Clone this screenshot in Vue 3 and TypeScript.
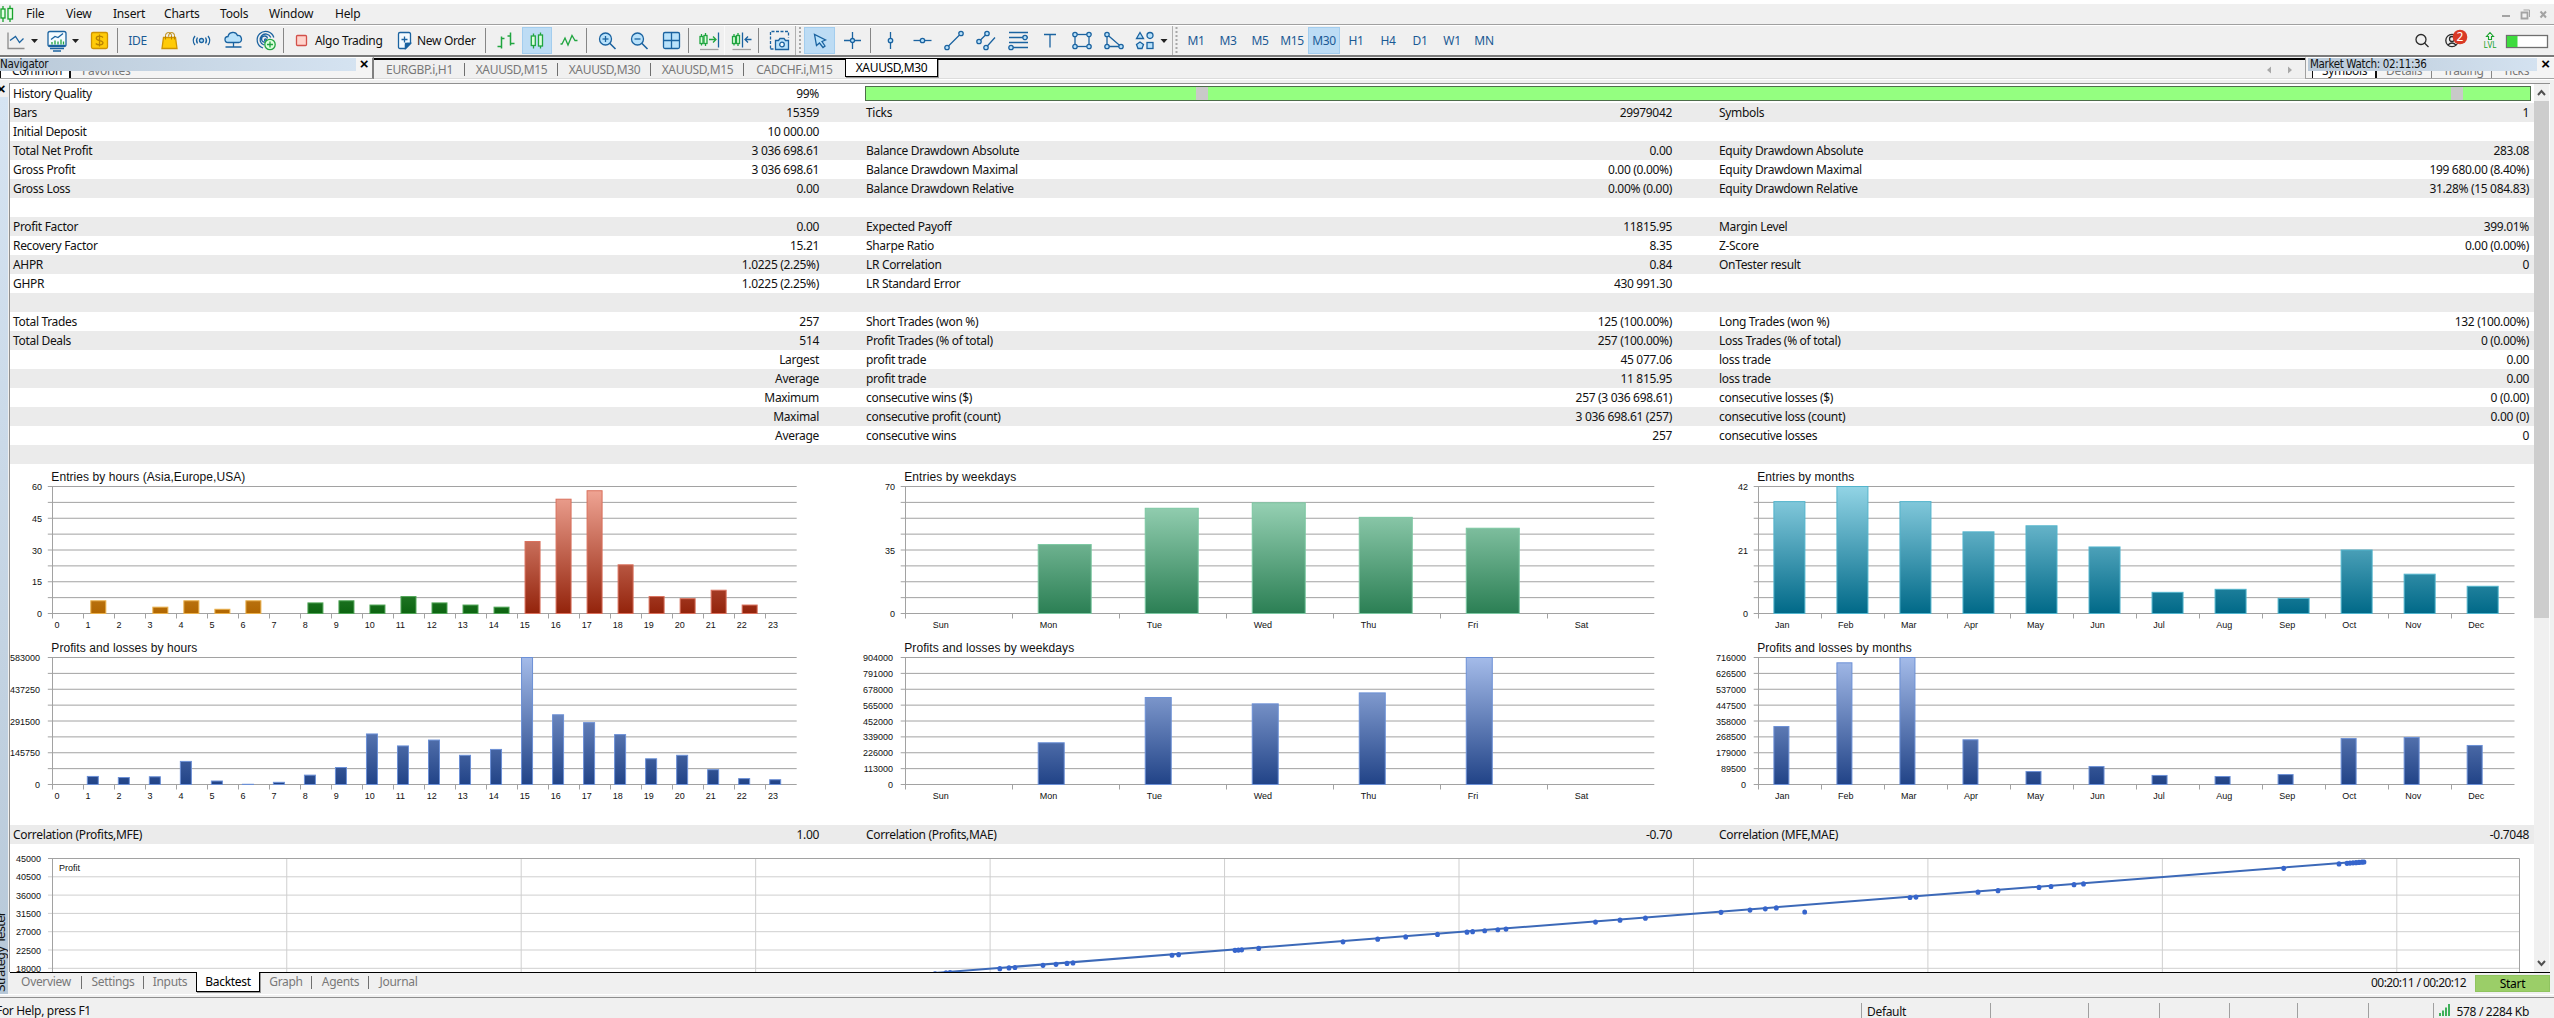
<script setup lang="ts">
interface Tool { k: string; w: number; dx?: number; on?: boolean; t?: string }
interface Chart {
  title: string; tw: number; box: number[]; left: number; right: number; top: number
  labels: string[]; lx: number; max: number; ticks: string[]; every: number; tx: number
  values: number[]; bx: number; bw: number; color: (i: number) => string
}

const menu = [
  { t: 'File', w: 40 }, { t: 'View', w: 47 }, { t: 'Insert', w: 51 }, { t: 'Charts', w: 56 },
  { t: 'Tools', w: 49 }, { t: 'Window', w: 66 }, { t: 'Help', w: 40 },
]

const tools: Tool[] = [
  { k: 'line', w: 31 }, { k: 'arrow', w: 7 }, { k: 'monitor', w: 34, dx: 2 }, { k: 'arrow', w: 7 },
  { k: 'dollar', w: 38, dx: 1.5 }, { k: 'sep', w: 1 }, { k: 'text', t: 'IDE', w: 39 }, { k: 'bag', w: 27, dx: -1 },
  { k: 'signal', w: 34, dx: .5 }, { k: 'cloud', w: 31 }, { k: 'vps', w: 34 }, { k: 'sep', w: 1 },
  { k: 'stop', w: 28, dx: 3.5 }, { k: 'label', t: 'Algo Trading', w: 83 }, { k: 'order', w: 19 },
  { k: 'label', t: 'New Order', w: 71 }, { k: 'sep', w: 1 }, { k: 'bars', w: 36, dx: 1.5 },
  { k: 'candles', w: 30, on: true }, { k: 'zigzag', w: 34 }, { k: 'sep', w: 1 }, { k: 'zoomin', w: 36, dx: 2 },
  { k: 'zoomout', w: 32 }, { k: 'grid', w: 33 }, { k: 'sep', w: 1 }, { k: 'scroll', w: 36, dx: 2 },
  { k: 'shift', w: 33 }, { k: 'sep', w: 1 }, { k: 'camera', w: 36, dx: 2.5 }, { k: 'end', w: 1 },
  { k: 'grip', w: 8 }, { k: 'cursor', w: 31, on: true }, { k: 'cross', w: 35 }, { k: 'sep', w: 1 },
  { k: 'vline', w: 36, dx: 1.5 }, { k: 'hline', w: 31 }, { k: 'trend', w: 32 }, { k: 'channel', w: 32 },
  { k: 'fibo', w: 32 }, { k: 'letter', w: 32 }, { k: 'rect', w: 32 }, { k: 'tri', w: 32 }, { k: 'shapes', w: 30 },
  { k: 'arrow', w: 8 }, { k: 'gap', w: 4 }, { k: 'end', w: 1 }, { k: 'grip', w: 7 },
  ...['M1', 'M3', 'M5', 'M15', 'M30', 'H1', 'H4', 'D1', 'W1', 'MN'].map(t => ({ k: 'text', t, w: 32, on: t === 'M30' })),
  { k: 'space', w: 0 }, { k: 'search', w: 36 }, { k: 'user', w: 36 }, { k: 'lvl', w: 28 }, { k: 'meter', w: 50 },
]

const chartTabs = [
  { t: 'EURGBP.i,H1', w: 91 }, { t: 'XAUUSD,M15', w: 93 }, { t: 'XAUUSD,M30', w: 93 },
  { t: 'XAUUSD,M15', w: 93 }, { t: 'CADCHF.i,M15', w: 101 }, { t: 'XAUUSD,M30', w: 93 },
]
const testerTabs = [
  { t: 'Overview', w: 72 }, { t: 'Settings', w: 62 }, { t: 'Inputs', w: 52 }, { t: 'Backtest', w: 64 },
  { t: 'Graph', w: 52 }, { t: 'Agents', w: 57 }, { t: 'Journal', w: 59 },
]

const rows: string[][] = [
  ['History Quality', '99%', '', '', '', ''],
  ['Bars', '15359', 'Ticks', '29979042', 'Symbols', '1'],
  ['Initial Deposit', '10 000.00', '', '', '', ''],
  ['Total Net Profit', '3 036 698.61', 'Balance Drawdown Absolute', '0.00', 'Equity Drawdown Absolute', '283.08'],
  ['Gross Profit', '3 036 698.61', 'Balance Drawdown Maximal', '0.00 (0.00%)', 'Equity Drawdown Maximal', '199 680.00 (8.40%)'],
  ['Gross Loss', '0.00', 'Balance Drawdown Relative', '0.00% (0.00)', 'Equity Drawdown Relative', '31.28% (15 084.83)'],
  ['', '', '', '', '', ''],
  ['Profit Factor', '0.00', 'Expected Payoff', '11815.95', 'Margin Level', '399.01%'],
  ['Recovery Factor', '15.21', 'Sharpe Ratio', '8.35', 'Z-Score', '0.00 (0.00%)'],
  ['AHPR', '1.0225 (2.25%)', 'LR Correlation', '0.84', 'OnTester result', '0'],
  ['GHPR', '1.0225 (2.25%)', 'LR Standard Error', '430 991.30', '', ''],
  ['', '', '', '', '', ''],
  ['Total Trades', '257', 'Short Trades (won %)', '125 (100.00%)', 'Long Trades (won %)', '132 (100.00%)'],
  ['Total Deals', '514', 'Profit Trades (% of total)', '257 (100.00%)', 'Loss Trades (% of total)', '0 (0.00%)'],
  ['', 'Largest', 'profit trade', '45 077.06', 'loss trade', '0.00'],
  ['', 'Average', 'profit trade', '11 815.95', 'loss trade', '0.00'],
  ['', 'Maximum', 'consecutive wins ($)', '257 (3 036 698.61)', 'consecutive losses ($)', '0 (0.00)'],
  ['', 'Maximal', 'consecutive profit (count)', '3 036 698.61 (257)', 'consecutive loss (count)', '0.00 (0)'],
  ['', 'Average', 'consecutive wins', '257', 'consecutive losses', '0'],
  ['', '', '', '', '', ''],
]
const correlation = ['Correlation (Profits,MFE)', '1.00', 'Correlation (Profits,MAE)', '-0.70', 'Correlation (MFE,MAE)', '-0.7048']

const hours = Array.from({ length: 24 }, (_, i) => String(i))
const days = ['Sun', 'Mon', 'Tue', 'Wed', 'Thu', 'Fri', 'Sat']
const months = ['Jan', 'Feb', 'Mar', 'Apr', 'May', 'Jun', 'Jul', 'Aug', 'Sep', 'Oct', 'Nov', 'Dec']
const H = { left: 52.3, right: 796.7, labels: hours, lx: 2.2 }
const W = { left: 905.2, right: 1654.3, labels: days, lx: 27.5 }
const M = { left: 1758.2, right: 2514.5, labels: months, lx: 16.8 }

const charts: Chart[] = [
  { ...H, title: 'Entries by hours (Asia,Europe,USA)', tw: 194, box: [10, 464, 846, 176], top: 486.5, max: 60, every: 2,
    ticks: ['60', '45', '30', '15', '0'], tx: 42, bx: 7, bw: 15.5, color: i => (i < 8 ? 'orange' : i < 15 ? 'green' : 'red'),
    values: [0, 6, 0, 3, 6, 2, 6, 0, 5, 6, 4, 8, 5, 4, 3, 34, 54, 58, 23, 8, 7, 11, 4, 0] },
  { ...W, title: 'Entries by weekdays', tw: 112, box: [856, 464, 853, 176], top: 486.5, max: 70, every: 4,
    ticks: ['70', '35', '0'], tx: 895, bx: 25.5, bw: 53.5, color: () => 'mint', values: [0, 38, 58, 61, 53, 47, 0] },
  { ...M, title: 'Entries by months', tw: 97, box: [1709, 464, 825, 176], top: 486.5, max: 42, every: 4,
    ticks: ['42', '21', '0'], tx: 1748, bx: 15.2, bw: 31.5, color: () => 'teal', values: [37, 42, 37, 27, 29, 22, 7, 8, 5, 21, 13, 9] },
  { ...H, title: 'Profits and losses by hours', tw: 146, box: [10, 640, 846, 185], top: 657.5, max: 583, every: 2,
    ticks: ['583000', '437250', '291500', '145750', '0'], tx: 40, bx: 3.5, bw: 11.5, color: () => 'blue',
    values: [0, 37, 32, 35.5, 106, 16, 1, 10, 43, 78, 232, 177, 204, 134, 161, 583, 320, 284, 229, 118, 134, 68, 27, 22] },
  { ...W, title: 'Profits and losses by weekdays', tw: 170, box: [856, 640, 853, 185], top: 657.5, max: 904, every: 1,
    ticks: ['904000', '791000', '678000', '565000', '452000', '339000', '226000', '113000', '0'], tx: 893, bx: 25.5, bw: 26.5,
    color: () => 'blue', values: [0, 297, 619, 574, 652, 904, 0] },
  { ...M, title: 'Profits and losses by months', tw: 154.5, box: [1709, 640, 825, 185], top: 657.5, max: 716, every: 1,
    ticks: ['716000', '626500', '537000', '447500', '358000', '268500', '179000', '89500', '0'], tx: 1746, bx: 15.2, bw: 15.5,
    color: () => 'blue', values: [327, 686, 716, 252, 73, 101, 51, 45, 56, 259, 265, 220] },
]
const PLOT = 127
const strokes: Record<string, string> = { orange: '#e9b04c', green: '#4fa556', red: '#d9705c', mint: '#7cc7a2', teal: '#52b4cc', blue: '#6c90d6' }
const stops: [string, string, string][] = [
  ['orange', '#f6d08c', '#b16600'], ['green', '#90d898', '#0c6410'], ['red', '#f2a898', '#93230b'],
  ['mint', '#a5dcc1', '#2b7f54'], ['teal', '#92d4e5', '#006988'], ['blue', '#a4bbe9', '#214387'],
]
const step = (c: Chart) => (c.right - c.left) / c.labels.length
const barH = (c: Chart, v: number) => (v / c.max) * PLOT
const bars = (c: Chart) => c.values
  .map((v, i) => ({ x: c.left + i * step(c) + c.bx, h: barH(c, v), col: c.color(i) }))
  .filter(b => b.h > 0)
  .map(b => ({ ...b, y: c.top + PLOT - b.h }))

const profitScale = ['45000', '40500', '36000', '31500', '27000', '22500', '18000']
const lineY = (x: number) => 972.1 - (x - 946) * 0.0782
const dots = [
  935, 946, 950, 999.8, 1009, 1015, 1043, 1056, 1067, 1073, 1172, 1178.6, 1235, 1238.4, 1241.7, 1258.7, 1343, 1377.7,
  1405.7, 1437.5, 1467, 1472.6, 1484.7, 1497.8, 1506, 1595.5, 1620, 1645.4, 1721, 1750, 1765.3, 1776.3, 1910, 1916,
  1978, 1998, 2039, 2051, 2074, 2083.5, 2283.7, 2339, 2347, 2350, 2353, 2356, 2359, 2362, 2364,
]
const statusCells = [129, 98, 70.5, 70.5, 68, 71, 65]
</script>

<template>
  <div class="app">
    <div class="cap"></div>
    <nav class="menubar">
      <svg class="logo" width="26" height="20" viewBox="0 0 26 20">
        <g fill="#e4ffe4" stroke="#18a32c" stroke-width="1.3"><path d="M3 2v3M3 14v4M10 1.5v3M10 15v3" /><rect x="1" y="5" width="4" height="9" /><rect x="8" y="4.500" width="4.500" height="10.500" /></g>
      </svg>
      <span v-for="m in menu" :key="m.t" :style="{ width: m.w + 'px' }">{{ m.t }}</span>
      <svg class="win" width="54" height="20" viewBox="2500 4 54 20">
        <g stroke="#a3a3a3" fill="none"><path d="M2502 16h8" stroke-width="2" /><path d="M2521.500 12.500h6v6h-6z" stroke-width="1.800" /><path d="M2523.500 10h6v7" /><path d="M2540.500 11.500l5.500 6m0-6l-5.500 6" stroke-width="2" /></g>
      </svg>
    </nav>

    <div class="toolbar">
      <div v-for="(t, i) in tools" :key="i" class="tool" :class="[t.k, { on: t.on }]" :style="t.k === 'space' ? {} : { width: t.w + 'px' }">
        <template v-if="t.t">{{ t.t }}</template>
        <svg v-else-if="!['sep', 'end', 'gap', 'space'].includes(t.k)" :width="t.w" height="29" :viewBox="`${-t.w / 2 - (t.dx || 0)} -14.5 ${t.w} 29`">
          <g fill="none" stroke="#1b63a0" stroke-width="1.3">
            <template v-if="t.k === 'line'"><path d="M-7.500-8V8H9" stroke="#8c8c8c" /><path d="M-5.500 0L0-4 4 2 8-2" /></template>
            <path v-else-if="t.k === 'arrow'" d="M-3.500-1.500h7L0 2.500z" fill="#222" stroke="none" />
            <template v-else-if="t.k === 'monitor'"><rect x="-9" y="-9" width="18" height="15" rx="2" fill="#f4fbff" /><path d="M-8 5h16M-7 8H7M-4 10.500H4" stroke-width="1.700" /><path d="M-6-1l4-3 3 1 5-4" /><path d="M-5 4V1.500M-2 4V0M1 4V1M4 4v-5M6.500 4v-3" stroke="#20a540" /></template>
            <template v-else-if="t.k === 'dollar'"><rect x="-8" y="-8" width="16" height="16" rx="1.500" fill="#ffcb08" stroke="#cf9400" /><path d="M3.500-3C2-5-3.200-5-3.200-2.200S3.500-.300 3.500 2.300-2 5-3.700 3M0-6V6" stroke="#b98300" /></template>
            <template v-else-if="t.k === 'bag'"><path d="M-6-3H6L7.500 8h-15z" fill="#ffcb08" stroke="#cf9400" /><path d="M-4-1v-4q0-3 3-3t3 3v4M-1-4q0-4 3-4t3 3v4" stroke="#b98300" stroke-width="1" /></template>
            <template v-else-if="t.k === 'signal'"><circle r="2" fill="#b9e2fb" /><path d="M-4-3Q-6 0-4 3M-6.500-4.500Q-10 0-6.500 4.500M4-3Q6 0 4 3M6.500-4.500Q10 0 6.500 4.500" /></template>
            <template v-else-if="t.k === 'cloud'"><path d="M-5.500 2a3 3 0 0 1 0-6 5 5 0 0 1 9.500-1A3.600 3.600 0 0 1 5.500 2z" fill="#b9e2fb" /><path d="M0 2v4M-8 6.500h16M-1.500 6.500h3" /></template>
            <template v-else-if="t.k === 'vps'"><path d="M-3 7.500A8.500 8.500 0 1 1 7.800-3M-2 4.500A5.600 5.600 0 1 1 4.800-3M-1 1.500A3 3 0 1 1 1.500-2" /><circle cx="-.500" cy="-.500" r="1" /><circle cx="4" cy="4" r="5.200" fill="#dcffdc" stroke="#20a540" /><path d="M1 4h6M4 1v6" stroke="#20a540" /></template>
            <rect v-else-if="t.k === 'stop'" x="-5" y="-5" width="10" height="10" rx="1" fill="#ffd3cc" stroke="#d2504a" />
            <template v-else-if="t.k === 'order'"><path d="M-6-6.500q0-1.500 1.500-1.500h9Q6-8 6-6.500V3L1 8h-5.500Q-6 8-6 6.500zM6 3H2.500Q1 3 1 4.500V8" fill="#f4fbff" /><path d="M1 8V3h5z" fill="#1b63a0" /><path d="M-3-1h6M0-4v6" /></template>
            <g v-else-if="t.k === 'bars'" stroke="#20a540" stroke-width="1.500"><path d="M-4-4V8M-8 6h4M-4-2h3M5-8V5M2-4.500h3M5 3h4" /></g>
            <g v-else-if="t.k === 'candles'" stroke="#20a540" fill="#dcffdc"><path d="M-3.500-7v3M-3.500 5v3M3.500-8v3M3.500 5v3" /><rect x="-5.700" y="-4.500" width="4" height="9.500" /><rect x="1.500" y="-5.500" width="4" height="11" /></g>
            <path v-else-if="t.k === 'zigzag'" d="M-8.500 3.500h1.500l3-6 3 7L3-5l3 5h2.500" stroke="#20a540" />
            <template v-else-if="t.k === 'zoomin' || t.k === 'zoomout'"><path d="M2.500 2.500L8.500 8.500" stroke-width="1.600" /><circle cx="-1.500" cy="-1.500" r="6" fill="#b9e2fb" /><path d="M-4.500-1.500h6" /><path v-if="t.k === 'zoomin'" d="M-1.500-4.500v6" /></template>
            <template v-else-if="t.k === 'grid'"><rect x="-8" y="-8" width="16" height="16" rx="1.500" fill="#b9e2fb" /><path d="M-8 0H8M0-8V8" /></template>
            <template v-else-if="t.k === 'scroll'"><g stroke="#20a540" fill="#dcffdc"><path d="M-7.500-6.500V5M-3.500-7.500V5.500" /><rect x="-9" y="-4" width="3" height="7" /><rect x="-5" y="-5" width="3" height="8" /><path d="M0-1h7M4-4l3 3-3 3" fill="none" /></g><path d="M9.500-8V7" /><path d="M-9 9H9.500" stroke="#a0a0a0" /></template>
            <template v-else-if="t.k === 'shift'"><g stroke="#20a540" fill="#dcffdc"><path d="M-7.500-6.500V5M-3.500-7.500V5.500" /><rect x="-9" y="-4" width="3" height="7" /><rect x="-5" y="-5" width="3" height="8" /></g><path d="M1-8V7M3.500-1H10M6.500-4l-3 3 3 3" /><path d="M-9 9H9.500" stroke="#a0a0a0" /></template>
            <template v-else-if="t.k === 'camera'"><path d="M-9 8V-9H9V-3M-9 8.500h4" stroke-dasharray="3 1.500" /><path d="M-4 0h3l1.500-2h4L6 0h3v9H-4z" fill="#b9e2fb" /><circle cx="2.500" cy="4" r="2.300" fill="#f4fbff" /></template>
            <path v-else-if="t.k === 'grip'" d="M0-13.500V14" stroke="#a8a8a8" stroke-width="2" stroke-dasharray="2 2" />
            <path v-else-if="t.k === 'cursor'" d="M-5-6L-3 5 0 2.500 3.500 7 5.500 5.500 2.500 1 6-.500z" fill="#b9e2fb" />
            <template v-else-if="t.k === 'cross'"><path d="M-8.500 0h17M0-8.500v17" /><circle r="2" fill="#b9e2fb" /></template>
            <template v-else-if="t.k === 'vline'"><path d="M0-8.500v17" /><circle r="2.200" fill="#b9e2fb" /></template>
            <template v-else-if="t.k === 'hline'"><path d="M-9 0H9" /><circle r="2.200" fill="#b9e2fb" /></template>
            <g v-else-if="t.k === 'trend'" fill="#b9e2fb"><path d="M-7 7L7-7" /><circle cx="-7" cy="7" r="2.200" /><circle cx="7" cy="-7" r="2.200" /></g>
            <g v-else-if="t.k === 'channel'" fill="#b9e2fb"><path d="M-7 1L1-7M0 7L9-3" /><circle cx="-7" cy="1" r="2.200" /><circle cx="1" cy="-7" r="2.200" /><circle cx="0" cy="7" r="2.200" /></g>
            <g v-else-if="t.k === 'fibo'" fill="#b9e2fb"><path d="M-9-8H10M-9-3H10M-9 2H10M-7 7H10" /><circle cx="7" cy="-3" r="2.200" /><circle cx="-7" cy="7" r="2.200" /></g>
            <path v-else-if="t.k === 'letter'" d="M-6-6H6M0-6V7" />
            <g v-else-if="t.k === 'rect'" fill="#b9e2fb"><rect x="-7" y="-6" width="14" height="12" fill="none" /><circle cx="-7" cy="-6" r="2.200" /><circle cx="7" cy="-6" r="2.200" /><circle cx="-7" cy="6" r="2.200" /><circle cx="7" cy="6" r="2.200" /></g>
            <g v-else-if="t.k === 'tri'" fill="#b9e2fb"><path d="M-7-6V6H7z" fill="none" /><circle cx="-7" cy="-6" r="2.200" /><circle cx="-7" cy="6" r="2.200" /><circle cx="7" cy="6" r="2.200" /></g>
            <g v-else-if="t.k === 'shapes'" fill="#b9e2fb"><path d="M-5-8l3.500 6h-7zM-5 1.500L-1.500 4-3 8h-4l-1.500-4z" /><circle cx="5" cy="-5" r="3" /><rect x="2" y="2" width="6" height="6" /></g>
            <g v-else-if="t.k === 'search'" stroke="#2a2a2a"><circle cx="-1" cy="-1" r="5" /><path d="M2.500 2.500L6.500 6.500" /></g>
            <g v-else-if="t.k === 'user'"><circle cx="-6" cy="0" r="6.200" stroke="#2a2a2a" /><circle cx="-6" cy="-1.500" r="2.500" stroke="#2a2a2a" /><path d="M-10 4.500q4-4 8 0" stroke="#2a2a2a" /><circle cx="2" cy="-3.500" r="7.300" fill="#d93a26" stroke="none" /><text x="2" y="0.500" class="badge">2</text></g>
            <g v-else-if="t.k === 'lvl'" stroke="#18a32c"><path d="M-1.500-1v-3H-3.500L0-8l3.500 4H1.500v3z" stroke-width="1.100" /><text x="0" y="7.500" class="lvl-t">LVL</text></g>
            <g v-else-if="t.k === 'meter'"><rect x="-22.500" y="-5" width="41" height="12" fill="#fff" stroke="#6f6f6f" /><rect x="-22" y="-4.500" width="10.500" height="11" fill="#3edb3e" stroke="none" /></g>
          </g>
        </svg>
      </div>
    </div>

    <div class="dock">
      <section class="pane nav">
        <header><b>Navigator</b><i>×</i></header>
        <div class="clip"><span class="tab act">Common</span><span class="tab">Favorites</span></div>
      </section>
      <div class="tabs top">
        <span v-for="(t, i) in chartTabs" :key="i" class="ct" :class="{ act: i === 5, last: i === 4 }" :style="{ width: t.w + 'px' }">{{ t.t }}</span>
        <svg class="pager" width="30" height="20" viewBox="2264 59 30 20"><path d="M2271 65.500v7l-4-3.500zM2288 65.500v7l4-3.500z" fill="#a8a8a8" /></svg>
      </div>
      <section class="pane mw">
        <header><b>Market Watch: 02:11:36</b><i>×</i></header>
        <div class="clip"><span class="tab act">Symbols</span><span class="tab">Details</span><span class="tab">Trading</span><span class="tab">Ticks</span></div>
      </section>
    </div>
    <div class="seam"></div>

    <main class="tester">
      <aside class="strip"><i>×</i><div class="bar"><span>Strategy Tester</span></div></aside>
      <div class="body">
        <div class="view">
          <div class="report">
            <div v-for="(r, i) in rows" :key="i" class="row" :class="{ alt: i % 2 }">
              <span class="l1">{{ r[0] }}</span><span class="v1">{{ r[1] }}</span>
              <div v-if="i === 0" class="quality"><i></i><i></i></div>
              <template v-else><span class="l2">{{ r[2] }}</span><span class="v2">{{ r[3] }}</span><span class="l3">{{ r[4] }}</span><span class="v3">{{ r[5] }}</span></template>
            </div>
            <div class="charts">
              <svg v-for="(c, n) in charts" :key="n" :width="c.box[2]" :height="c.box[3]" :viewBox="c.box.join(' ')">
                <defs>
                  <linearGradient v-for="s in stops" :id="s[0] + n" :key="s[0]" gradientUnits="userSpaceOnUse" x1="0" x2="0" :y1="c.top" :y2="c.top + PLOT">
                    <stop offset="0" :stop-color="s[1]" /><stop offset="1" :stop-color="s[2]" />
                  </linearGradient>
                </defs>
                <text class="title" :x="c.left - 1" :y="c.top - 5.5" :textLength="c.tw">{{ c.title }}</text>
                <g stroke="#a2a2a2">
                  <path v-for="g in 9" :key="g" :d="`M${c.left - 4.5} ${c.top + (g - 1) * PLOT / 8}H${c.right}`" />
                  <path :d="`M${Math.floor(c.left) + .5} ${c.top}v${PLOT}`" />
                  <path v-for="(l, i) in c.labels" :key="i" :d="`M${Math.floor(c.left + i * step(c)) + .5} ${c.top + PLOT}v5`" />
                </g>
                <rect v-for="(b, i) in bars(c)" :key="'b' + i" :x="b.x + .5" :y="b.y" :width="c.bw - .5" :height="b.h" :fill="`url(#${b.col}${n})`" :stroke="strokes[b.col]" />
                <text v-for="(l, i) in c.ticks" :key="'t' + i" class="tick" text-anchor="end" :x="c.tx" :y="c.top + i * c.every * PLOT / 8 + 3.5">{{ l }}</text>
                <text v-for="(l, i) in c.labels" :key="'l' + i" class="tick" :x="c.left + i * step(c) + c.lx" :y="c.top + PLOT + 14.7">{{ l }}</text>
              </svg>
            </div>
            <div class="row alt">
              <span class="l1">{{ correlation[0] }}</span><span class="v1">{{ correlation[1] }}</span><span class="l2">{{ correlation[2] }}</span><span class="v2">{{ correlation[3] }}</span><span class="l3">{{ correlation[4] }}</span><span class="v3">{{ correlation[5] }}</span>
            </div>
            <svg class="scatter" width="2524" height="128" viewBox="10 844 2524 128">
              <path v-for="g in 6" :key="g" :d="`M48 ${858.5 + g * 18.3}H2519`" stroke="#cfcfcf" />
              <path v-for="g in 10" :key="'v' + g" :d="`M${52.3 + g * 234.45} 858V972`" stroke="#cfcfcf" />
              <path d="M48 858.500H2519.500V972M52.500 858V972" fill="none" stroke="#a2a2a2" />
              <text v-for="(l, i) in profitScale" :key="l" class="tick" text-anchor="end" x="41" :y="862 + i * 18.3">{{ l }}</text>
              <text class="tick" x="59" y="871">Profit</text>
              <path :d="`M932 ${lineY(932)}L2364 ${lineY(2364)}`" stroke="#3c69b8" stroke-width="2" />
              <g fill="#3665cc"><ellipse v-for="d in dots" :key="d" :cx="d" :cy="lineY(d) + .8" rx="2.400" ry="2.600" /><ellipse cx="1804.700" cy="912" rx="2.400" ry="2.600" /></g>
            </svg>
          </div>
          <div class="scroll">
            <svg width="15" height="17" viewBox="0 0 15 17"><path d="M4 11l3.500-4L11 11" fill="none" stroke="#505050" stroke-width="2" /></svg>
            <div class="thumb"></div><div class="track"></div>
            <svg width="15" height="17" viewBox="0 0 15 17"><path d="M4 6l3.500 4L11 6" fill="none" stroke="#505050" stroke-width="2" /></svg>
          </div>
        </div>
        <div class="tabs bottom">
          <span v-for="(t, i) in testerTabs" :key="t.t" class="ct" :class="{ act: i === 3, last: i === 2 || i === 6 }" :style="{ width: t.w + 'px' }">{{ t.t }}</span>
          <span class="clock">00:20:11 / 00:20:12</span><button>Start</button>
        </div>
      </div>
    </main>

    <footer class="status">
      <span class="help">For Help, press F1</span>
      <span v-for="(w, i) in statusCells" :key="i" class="cell" :style="{ width: w + 'px' }">{{ i === 0 ? 'Default' : '' }}</span>
      <span class="cell net"><svg width="12" height="14" viewBox="0 0 12 14"><path d="M1 13V10M4 13V7.500M7 13V4.500M10 13V1" stroke="#20a540" stroke-width="1.700" /></svg>578 / 2284 Kb</span>
    </footer>
  </div>
</template>

<style>
body { margin: 0; background: #f0f0f0; }
</style>

<style scoped>
* { box-sizing: border-box; }
.app { width: 2554px; height: 1018px; overflow: hidden; display: flex; flex-direction: column; background: #f0f0f0; color: #111; font: 12px/19px "Noto Sans", "Open Sans", sans-serif; letter-spacing: -.32px; white-space: nowrap; }
.cap { height: 4px; background: #fff; flex: none; }
.menubar { height: 21px; flex: none; display: flex; line-height: 20px; border-bottom: 1px solid #a0a0a0; letter-spacing: -.2px; }
.logo { flex: none; }
.win { margin-left: auto; }
.toolbar { height: 32px; flex: none; display: flex; border-top: 1px solid #fff; border-bottom: 2px solid #7a7a7a; }
.tool { height: 29px; flex: none; line-height: 29px; }
.tool svg { display: block; overflow: visible; }
.tool.text { text-align: center; color: #1b5a94; height: 27px; line-height: 27px; margin-top: 1px; }
.tool.label { padding-left: 3px; line-height: 29px; }
.tool.sep { background: #868686; height: 25px; margin-top: 2px; }
.tool.end { background: #b0b0b0; }
.tool.space { flex: 1; }
.tool.on { background: #bddcf4; box-shadow: inset 0 0 0 1px #a3cdee; height: 27px; margin-top: 1px; }
.tool.on svg { margin-top: -1px; }
.badge { font: 12px "Noto Sans", sans-serif; fill: #fff; stroke: none; text-anchor: middle; letter-spacing: 0; }
.lvl-t { font: 8px "Noto Sans", sans-serif; fill: #18a32c; stroke: none; text-anchor: middle; letter-spacing: 0; }

.dock { height: 22px; flex: none; display: flex; }
.pane { height: 22px; border-bottom: 1px solid #a5a5a5; border-top: 1px solid #fff; overflow: hidden; flex: none; background: #f4f4f4; }
.pane header { height: 13px; display: flex; justify-content: space-between; background: linear-gradient(90deg, #b9c9d8, #d6e4f2); line-height: 13px; }
.pane b { font: 11.500px/13px "DejaVu Sans Condensed", "DejaVu Sans", sans-serif; letter-spacing: -.25px; }
.pane i, .strip i { font: bold 15px/12px "Liberation Sans", sans-serif; color: #000; text-align: center; }
.pane header i { width: 17px; background: #f4f4f4; }
.nav { width: 374px; border-right: 2px solid #808080; }
.nav header i { width: 16px; }
.mw { width: 249px; border-left: 1px solid #a0a0a0; padding-left: 2px; }
.mw b { padding-left: 2px; letter-spacing: -.35px; }
.clip { height: 7px; display: flex; overflow: hidden; align-items: flex-end; }
.tab { height: 22px; line-height: 30px; padding: 0 10px; color: #777; flex: none; border-right: 1px solid #888; }
.nav .tab { width: 71px; padding: 0 0 0 11px; border: 0; }
.mw .tab { width: 55px; padding: 0 0 0 9px; }
.mw .tab:nth-child(3) { width: 60px; padding-left: 11px; }
.mw .tab:nth-child(4) { border: 0; padding-left: 11px; }
.tab.act, .mw .tab.act, .nav .tab.act { background: #fff; color: #111; border: 2px solid #111; border-width: 0 2px 0 1px; }
.mw .tab.act { width: 65px; margin-left: 4px; }
.tabs { display: flex; color: #787878; }
.top { flex: 1; border-top: 2px solid #000; margin-top: 1px; border-bottom: 1px solid #dcdcdc; }
.ct { flex: none; position: relative; text-align: center; height: 18px; }
.ct::after { content: ""; position: absolute; right: 0; top: 3px; height: 13px; width: 1px; background: #707070; }
.ct.act::after, .ct.last::after { display: none; }
.ct.act { background: #fff; color: #000; border: 1.500px solid #000; border-top: 0; margin-top: -1px; box-shadow: 1px 1px #9a9a9a; height: 18px; }
.top .ct.act { line-height: 18px; }
.pager { margin-left: auto; margin-right: 11px; }
.seam { height: 4px; flex: none; border-top: 1px solid #fff; }

.tester { height: 912px; flex: none; display: flex; border-bottom: 1px solid #fff; }
.strip { width: 9px; flex: none; display: flex; flex-direction: column; }
.strip i { height: 14px; margin-left: -6px; width: 14px; }
.bar { flex: 1; width: 8px; background: linear-gradient(#d6e4f2, #b7c8d8); overflow: hidden; display: flex; align-items: flex-end; }
.bar span { writing-mode: vertical-rl; transform: rotate(180deg); font: 12px/14px "DejaVu Sans", sans-serif; letter-spacing: -.75px; margin: 0 0 2px -6px; }
.body { flex: 1; display: flex; flex-direction: column; min-width: 0; }
.view { height: 889px; display: flex; border: 1px solid #909090; border-width: 1px 0 0 1px; background: #fff; margin-right: 4px; }
.report { width: 2524px; flex: none; overflow: hidden; height: 888px; }
.row { display: flex; height: 19px; padding-left: 3px; }
.row.alt { background: #ebebeb; }
.l1 { width: 500px; }
.v1 { width: 306px; text-align: right; }
.l2 { width: 500px; margin-left: 47px; }
.v2 { width: 306px; text-align: right; }
.l3 { width: 500px; margin-left: 47px; }
.v3 { width: 310px; text-align: right; }
.quality { width: 1666px; height: 15px; margin: 2px 0 0 46px; border: 1px solid #4d6e4a; background: #94ff80; display: flex; }
.quality i { width: 12px; background: #c9c9c9; margin-left: 330px; }
.quality i + i { margin-left: 1243px; }
.charts { height: 361px; display: flex; flex-wrap: wrap; }
.charts svg, .scatter { display: block; flex: none; }
.title { font: 12px "Liberation Sans", Arial, sans-serif; fill: #111; letter-spacing: 0; }
.tick { font: 9px "Liberation Sans", Arial, sans-serif; fill: #111; letter-spacing: 0; }
.scroll { width: 16px; background: #f0f0f0; display: flex; flex-direction: column; border-right: 1px solid #fafafa; }
.thumb { height: 517px; background: #cdcdcd; }
.track { flex: 1; }
.bottom { border-top: 1px solid #000; height: 22px; margin-left: 1px; margin-right: 4px; line-height: 18px; }
.bottom .ct::after { top: 3px; }
.bottom .ct.act { height: 20px; line-height: 20px; }
.clock { margin-left: auto; margin-right: 9px; color: #111; line-height: 20px; letter-spacing: -.58px; }
button { width: 75px; height: 17px; margin-top: 2px; border: 1px solid #8fc45f; background: #9bce68; font: inherit; line-height: 15px; letter-spacing: inherit; padding: 0; }
.status { height: 22px; flex: none; border-top: 1px solid #8e8e8e; margin-top: 2px; display: flex; line-height: 26px; }
.help { margin-left: -4px; width: 1865px; }
.cell { border-left: 1px solid #a0a0a0; margin-top: 5px; padding-left: 5px; line-height: 17px; flex: none; }
.net { flex: 1; display: flex; justify-content: space-between; padding-right: 25px; }
</style>
